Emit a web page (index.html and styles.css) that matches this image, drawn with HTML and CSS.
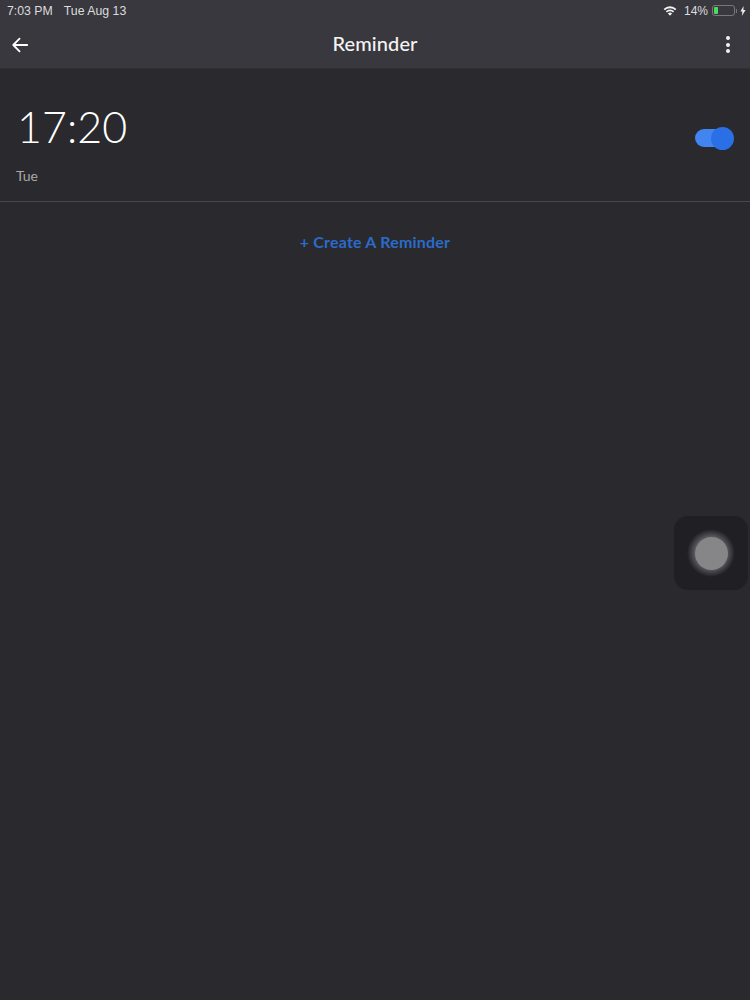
FILE: index.html
```html
<!DOCTYPE html>
<html lang="en">
<head>
  <meta charset="UTF-8">
  <meta name="viewport" content="width=device-width, initial-scale=1">
  <title>Reminder</title>
  <link rel="stylesheet" href="styles.css">
</head>
<body>

  <!-- header -->
  <header class="top">
    <div class="status-bar">
      <div class="status-left">
        <span>7:03 PM</span>
        <span>Tue Aug 13</span>
      </div>
      <div class="status-right">
        <svg class="wifi" viewBox="0 0 16 12">
          <path fill="currentColor" d="M8 12 5.6 9.4a3.4 3.4 0 0 1 4.8 0Z"/>
          <path fill="currentColor" d="M4.5 8.2 3.2 6.8a6.9 6.9 0 0 1 9.6 0l-1.3 1.4a5 5 0 0 0-7 0Z"/>
          <path fill="currentColor" d="M2.1 5.7.7 4.2a10.6 10.6 0 0 1 14.6 0l-1.4 1.5a8.6 8.6 0 0 0-11.8 0Z"/>
        </svg>
        <span class="percent">14%</span>
        <div class="battery"><div class="battery-level"></div></div>
        <div class="battery-tip"></div>
        <svg class="bolt" viewBox="0 0 6 10">
          <path fill="currentColor" d="M3.6 0 .4 5.6h2L1.8 10 5.6 4H3.4Z"/>
        </svg>
      </div>
    </div>

    <div class="app-bar">
      <svg class="back" viewBox="0 0 20 20" fill="none">
        <path stroke="currentColor" stroke-width="2" stroke-linecap="round" stroke-linejoin="round"
              d="M18 10H2.5M9.5 3 2.5 10l7 7"/>
      </svg>
      <h1>Reminder</h1>
      <div class="more">
        <span></span><span></span><span></span>
      </div>
    </div>
  </header>

  <!-- reminder row -->
  <section class="reminder">
    <div class="reminder-info">
      <div class="time">17:20</div>
      <div class="day">Tue</div>
    </div>
    <div class="switch"><div class="switch-knob"></div></div>
  </section>

  <a class="create" href="#">+ Create A Reminder</a>

  <!-- assistive touch -->
  <div class="assistive">
    <div class="ring-outer">
      <div class="dot"></div>
    </div>
  </div>

</body>
</html>
```

FILE: styles.css
```css
/* reset */
*, *::before, *::after { margin:0; padding:0; box-sizing:border-box; }
html, body { width:100%; height:100%; }

body {
  background:#2a292d;
  color:#fff;
  font-family:'Lato','Noto Sans',sans-serif;
  overflow:hidden;
  position:relative;
}

/* header */
.top {
  height:69px;
  background:#39383e;
  border-bottom:1px solid #313035;
}

.status-bar {
  height:21px;
  padding:0 4px 0 7px;
  display:flex; align-items:center; justify-content:space-between;
  font-family:'Liberation Sans',sans-serif;
  font-size:12.3px;
  color:#dcdcde;
}
.status-left { display:flex; gap:11px; }
.status-right { display:flex; align-items:center; }

.wifi { width:14px; height:11px; color:#f2f2f2; margin-right:6.5px; }
.percent { font-size:12px; margin-right:3.5px; }

.battery {
  width:23px; height:11px;
  border:1px solid #77777a;
  border-radius:3px;
  padding:1px;
}
.battery-level {
  width:4px; height:100%;
  background:#4cd964;
  border-radius:1px;
}
.battery-tip {
  width:1.5px; height:4px;
  background:#77777a;
  margin:0 3px 0 1px;
}
.bolt { width:6px; height:10px; color:#ececec; }

.app-bar {
  height:47px;
  padding:0 20px 0 11px;
  display:flex; align-items:center; justify-content:space-between;
  position:relative;
}
.back { width:18px; height:18px; }
.app-bar h1 {
  position:absolute; left:0; right:0; top:9px;
  text-align:center;
  font-size:20px; font-weight:500;
  line-height:26px;
  letter-spacing:.1px;
  color:#f4f4f4;
  pointer-events:none;
}
.more { display:flex; flex-direction:column; gap:2.5px; }
.more span {
  width:4px; height:4px;
  background:#f2f2f2;
  border-radius:50%;
}

/* reminder row */
.reminder {
  height:133px;
  padding:0 19px 0 16px;
  border-bottom:1px solid #48474b;
  display:flex; align-items:flex-start; justify-content:space-between;
}
.time {
  margin:29px 0 0 1px;
  font-size:43px; line-height:58px;
  font-weight:300;
}
.day {
  margin-top:11px;
  font-size:14px; line-height:18px;
  color:#a9a9ab;
}

.switch {
  width:36px; height:18px;
  margin:60px 0 0 0;
  background:#4285f0;
  border-radius:9px;
  position:relative;
}
.switch-knob {
  position:absolute; top:-2.5px; right:-3px;
  width:23px; height:23px;
  background:#2a6fe6;
  border-radius:50%;
}

/* create link */
.create {
  display:block;
  margin-top:30px;
  text-align:center;
  font-size:16px; line-height:20px;
  font-weight:700;
  letter-spacing:.2px;
  color:#2b6bcb;
  text-decoration:none;
}

/* assistive touch */
.assistive {
  position:absolute; left:674px; top:516px;
  width:74px; height:74px;
  background:#201f23;
  border-radius:14px;
  display:flex; align-items:center; justify-content:center;
}
.ring-outer {
  width:48px; height:48px;
  border-radius:50%;
  background:radial-gradient(circle closest-side,#5a595d 0%,#5a595d 68%,#4a494d 76%,#3a393d 85%,#2a292d 94%,#201f23 100%);
  display:flex; align-items:center; justify-content:center;
}
.dot {
  width:33px; height:33px;
  border-radius:50%;
  background:#868588;
}
```
